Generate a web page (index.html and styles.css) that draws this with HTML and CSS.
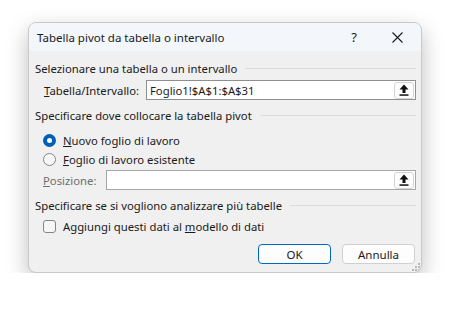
FILE: index.html
```html
<!DOCTYPE html>
<html lang="it">
<head>
    <meta charset="UTF-8">
    <title>Tabella pivot da tabella o intervallo</title>
    <link rel="stylesheet" href="styles.css">
</head>
<body>

<div class="dialog">
    <div class="titlebar">
        <span class="title">Tabella pivot da tabella o intervallo</span>
        <span class="help">?</span>
        <span class="close">
            <svg width="11" height="11" viewBox="0 0 11 11"><path d="M0.5 0.5 L10.5 10.5 M10.5 0.5 L0.5 10.5" stroke="#1a1a1a" stroke-width="1.1" fill="none"/></svg>
        </span>
    </div>

    <div class="content">
        <div class="section">Selezionare una tabella o un intervallo</div>
        <div class="field-row range-row">
            <label class="range-label"><u>T</u>abella/Intervallo:</label>
            <div class="ref-box">
                <span class="ref-value">Foglio1!$A$1:$A$31</span>
                <span class="ref-btn">
                    <svg width="10" height="12" viewBox="0 0 10 12"><path d="M5 0.5 L9.5 5.5 L6.5 5.5 L6.5 9 L3.5 9 L3.5 5.5 L0.5 5.5 Z" fill="#111"/><rect x="0.5" y="10.3" width="9" height="1.5" fill="#111"/></svg>
                </span>
            </div>
        </div>

        <div class="section sec-2">Specificare dove collocare la tabella pivot</div>
        <div class="option opt-1">
            <span class="radio checked"></span>
            <span><u>N</u>uovo foglio di lavoro</span>
        </div>
        <div class="option opt-2">
            <span class="radio"></span>
            <span><u>F</u>oglio di lavoro esistente</span>
        </div>
        <div class="field-row pos-row">
            <label class="pos-label"><u>P</u>osizione:</label>
            <div class="ref-box disabled">
                <span class="ref-value"></span>
                <span class="ref-btn">
                    <svg width="10" height="12" viewBox="0 0 10 12"><path d="M5 0.5 L9.5 5.5 L6.5 5.5 L6.5 9 L3.5 9 L3.5 5.5 L0.5 5.5 Z" fill="#111"/><rect x="0.5" y="10.3" width="9" height="1.5" fill="#111"/></svg>
                </span>
            </div>
        </div>

        <div class="section sec-3">Specificare se si vogliono analizzare più tabelle</div>
        <div class="option opt-check">
            <span class="checkbox"></span>
            <span>Aggiungi questi dati al <u>m</u>odello di dati</span>
        </div>

        <div class="buttons">
            <button class="btn default">OK</button>
            <button class="btn">Annulla</button>
        </div>
    </div>

    <svg class="grip" width="9" height="9" viewBox="0 0 9 9">
        <rect x="7" y="1" width="2" height="2" fill="#b8b8b8"/>
        <rect x="4" y="4" width="2" height="2" fill="#b8b8b8"/>
        <rect x="7" y="4" width="2" height="2" fill="#b8b8b8"/>
        <rect x="1" y="7" width="2" height="2" fill="#b8b8b8"/>
        <rect x="4" y="7" width="2" height="2" fill="#b8b8b8"/>
        <rect x="7" y="7" width="2" height="2" fill="#b8b8b8"/>
    </svg>
</div>

</body>
</html>
```

FILE: styles.css
```css
body {
    margin: 0;
    padding: 0;
    background-color: #ffffff;
    font-family: "Noto Sans", "Liberation Sans", sans-serif;
    font-size: 11.3px;
    color: #1a1a1a;
}
.dialog {
    position: relative;
    width: 394px;
    height: 251px;
    margin: 22px 0 0 28px;
    background-color: #f0f0f0;
    border: 1px solid #c9c9c9;
    box-sizing: border-box;
    border-radius: 8px;
    box-shadow: 0 8px 22px rgba(0, 0, 0, 0.26);
    overflow: hidden;
}
.titlebar {
    height: 28px;
    display: flex;
    align-items: center;
    padding-left: 8px;
    background-color: #f3f6fa;
    font-size: 11.5px;
}
.title {
    flex: 1;
}
.help {
    width: 20px;
    text-align: center;
    font-size: 13px;
    margin-right: 23px;
}
.close {
    display: flex;
    width: 20px;
    justify-content: center;
    margin-right: 14px;
}
.content {
    padding: 9px 5px 0 6px;
}
.section {
    display: flex;
    align-items: center;
    height: 16px;
    white-space: nowrap;
}
.section::after {
    content: "";
    flex: 1;
    height: 1px;
    margin-left: 8px;
    background-color: #dcdcdc;
}
.sec-2 {
    margin-top: 7px;
}
.sec-3 {
    margin-top: 7px;
}
.field-row {
    display: flex;
    align-items: center;
    height: 20px;
}
.range-row {
    margin-top: 4px;
    padding-left: 9px;
}
.range-label {
    width: 102px;
    white-space: nowrap;
}
.pos-row {
    margin-top: 3px;
    padding-left: 8px;
}
.pos-label {
    width: 63px;
    color: #6e6e6e;
}
.ref-box {
    flex: 1;
    display: flex;
    align-items: center;
    height: 20px;
    box-sizing: border-box;
    border: 1px solid #8f8f8f;
    background-color: #fff;
    padding-left: 3px;
}
.ref-box.disabled {
    border-color: #a6a6a6;
}
.ref-value {
    flex: 1;
}
.ref-btn {
    display: flex;
    align-items: center;
    justify-content: center;
    width: 20px;
    height: 17px;
    margin-right: 1px;
    box-sizing: border-box;
    border: 1px solid #d4d4d4;
    border-radius: 3px;
    background-color: #fdfdfd;
}
.option {
    display: flex;
    align-items: center;
    height: 16px;
    padding-left: 8px;
}
.opt-1 {
    margin-top: 9px;
}
.opt-2 {
    margin-top: 3px;
}
.opt-check {
    margin-top: 5px;
}
.radio {
    width: 13px;
    height: 13px;
    margin-right: 7px;
    box-sizing: border-box;
    border: 1px solid #868686;
    border-radius: 50%;
    background-color: #f6f6f6;
}
.radio.checked {
    border: 4px solid #005fb8;
    background-color: #fff;
}
.checkbox {
    width: 13px;
    height: 13px;
    margin-right: 7px;
    box-sizing: border-box;
    border: 1px solid #868686;
    border-radius: 3px;
    background-color: #f6f6f6;
}
.buttons {
    display: flex;
    justify-content: flex-end;
    gap: 11px;
    margin-top: 10px;
    padding-right: 1px;
}
.btn {
    width: 73px;
    height: 20px;
    padding: 0;
    font-family: "Noto Sans", "Liberation Sans", sans-serif;
    font-size: 11.5px;
    color: #1a1a1a;
    background-color: #fdfdfd;
    border: 1px solid #d0d0d0;
    border-radius: 4px;
}
.btn.default {
    border: 1.5px solid #0067c0;
}
.grip {
    position: absolute;
    right: 1px;
    bottom: 1px;
}
```
